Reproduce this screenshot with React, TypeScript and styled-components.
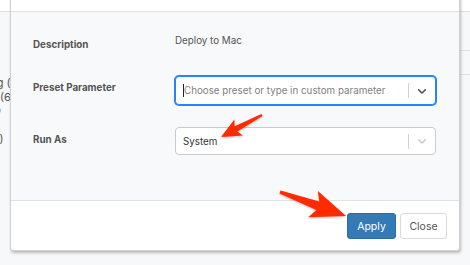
import React from "react";
import styled, { createGlobalStyle } from "styled-components";

const GlobalStyle = createGlobalStyle`
  html, body {
    margin: 0;
    padding: 0;
    background: #f7f8fa;
  }
  body {
    font-family: Inter, "Liberation Sans", Arial, sans-serif;
    -webkit-font-smoothing: antialiased;
  }
`;

type Pt = [number, number];

// tapered arrow with a slightly barbed head
const arrowPoints = (
  tail: Pt,
  tip: Pt,
  headLen: number,
  headW: number,
  tailW: number,
  neckW: number,
  barb: number
) => {
  const dx = tip[0] - tail[0];
  const dy = tip[1] - tail[1];
  const len = Math.sqrt(dx * dx + dy * dy);
  const ux = dx / len;
  const uy = dy / len;
  const nx = -uy;
  const ny = ux;
  const bx = tip[0] - ux * headLen;
  const by = tip[1] - uy * headLen;
  const pts: Pt[] = [
    [tail[0] + (nx * tailW) / 2, tail[1] + (ny * tailW) / 2],
    [bx + (nx * neckW) / 2, by + (ny * neckW) / 2],
    [bx + nx * headW - ux * barb, by + ny * headW - uy * barb],
    tip,
    [bx - nx * headW - ux * barb, by - ny * headW - uy * barb],
    [bx - (nx * neckW) / 2, by - (ny * neckW) / 2],
    [tail[0] - (nx * tailW) / 2, tail[1] - (ny * tailW) / 2],
  ];
  return pts.map((p) => `${p[0].toFixed(1)},${p[1].toFixed(1)}`).join(" ");
};

const Chevron = ({ color }: { color: string }) => (
  <svg width="14" height="14" viewBox="0 0 20 20" fill={color}>
    <path d="M4.516 7.548c0.436-0.446 1.043-0.481 1.576 0l3.908 3.747 3.908-3.747c0.533-0.481 1.141-0.446 1.574 0 0.436 0.445 0.408 1.197 0 1.615-0.406 0.418-4.695 4.502-4.695 4.502-0.217 0.223-0.502 0.335-0.787 0.335s-0.57-0.112-0.789-0.335c0 0-4.287-4.084-4.695-4.502s-0.436-1.17 0-1.615z" />
  </svg>
);

const App = () => {
  return (
    <>
      <GlobalStyle />
      <Page>
        <TopBar />
        <Backdrop>
          <BgList>
            <BgLine $shift={-39} $top={65}>Pending (6)</BgLine>
            <BgLine $shift={-34} $top={1}>Failed (6)</BgLine>
            <BgLine $shift={-19} $top={0}>Info</BgLine>
            <BgLine $shift={-40} $top={16}>Total (0)</BgLine>
          </BgList>
          <BgTable>
            <BgRow $h={38} />
            <BgRow $h={23} />
          </BgTable>
        </Backdrop>

        <Modal>
          <ModalHeader />
          <ModalBody>
            <Row $top={22}>
              <Label $offset={4}>Description</Label>
              <Value>Deploy to Mac</Value>
            </Row>
            <Row $top={24}>
              <Label $offset={5}>Preset Parameter</Label>
              <Select $focused>
                <SelectValue $placeholder>
                  <Caret />
                  Choose preset or type in custom parameter
                </SelectValue>
                <Separator />
                <Indicator>
                  <Chevron color="#555" />
                </Indicator>
              </Select>
            </Row>
            <Row $top={22}>
              <Label $offset={6}>Run As</Label>
              <Select>
                <SelectValue>System</SelectValue>
                <Separator />
                <Indicator>
                  <Chevron color="#ccc" />
                </Indicator>
              </Select>
            </Row>
          </ModalBody>
          <ModalFooter>
            <Button $primary>Apply</Button>
            <Button>Close</Button>
          </ModalFooter>
        </Modal>

        <Annotations viewBox="0 0 470 265">
          <polygon points={arrowPoints([262, 115], [221, 137], 17, 9, 2, 6, 3)} />
          <polygon points={arrowPoints([280, 192], [346, 216], 30, 14, 3, 9, 5)} />
        </Annotations>
      </Page>
    </>
  );
};

const Page = styled.div`
  position: relative;
  width: 470px;
  height: 265px;
  overflow: hidden;
  background: #f7f8fa;
`;

const TopBar = styled.div`
  height: 11px;
  border-bottom: 1px solid #dcdfe3;
  background: #fff;
`;

const Backdrop = styled.div`
  display: flex;
  justify-content: space-between;
`;

const BgList = styled.div`
  width: 40px;
  overflow: hidden;
  display: flex;
  flex-direction: column;
`;

const BgLine = styled.div<{ $shift: number; $top: number }>`
  margin-left: ${(p) => p.$shift}px;
  margin-top: ${(p) => p.$top}px;
  white-space: nowrap;
  font-size: 11px;
  line-height: 13px;
  color: #555;
`;

const BgTable = styled.div`
  width: 40px;
  display: flex;
  flex-direction: column;
`;

const BgRow = styled.div<{ $h: number }>`
  height: ${(p) => p.$h}px;
  border-bottom: 1px solid #dfe1e4;
`;

const Modal = styled.div`
  position: absolute;
  left: 10px;
  top: -30px;
  width: 448px;
  background: #fff;
  border: 1px solid rgba(0, 0, 0, 0.18);
  border-top: none;
  border-radius: 0 0 3px 3px;
  box-shadow: 1px 2px 3px rgba(0, 0, 0, 0.25);
  display: flex;
  flex-direction: column;
`;

const ModalHeader = styled.div`
  height: 41px;
  border-bottom: 1px solid #dfe1e4;
  background: #fff;
`;

const ModalBody = styled.div`
  height: 189px;
  box-sizing: border-box;
  padding: 0 23px 0 22px;
  background: #f8f9fb;
  border-bottom: 1px solid #dfe1e4;
`;

const Row = styled.div<{ $top: number }>`
  display: grid;
  grid-template-columns: 142px 261px;
  align-items: start;
  margin-top: ${(p) => p.$top}px;
`;

const Label = styled.div<{ $offset: number }>`
  padding-top: ${(p) => p.$offset}px;
  font-size: 9.8px;
  line-height: 14px;
  font-weight: 700;
  color: #555;
`;

const Value = styled.div`
  font-size: 9.8px;
  line-height: 14px;
  color: #555;
`;

const Select = styled.div<{ $focused?: boolean }>`
  box-sizing: border-box;
  height: ${(p) => (p.$focused ? 29 : 28)}px;
  display: flex;
  align-items: center;
  background: #fff;
  border: 1px solid ${(p) => (p.$focused ? "#2684ff" : "#c9cbcf")};
  box-shadow: ${(p) => (p.$focused ? "0 0 0 1px #2684ff" : "none")};
  border-radius: 4px;
`;

const SelectValue = styled.div<{ $placeholder?: boolean }>`
  flex: 1;
  display: flex;
  align-items: center;
  padding-left: 7px;
  font-size: 9.8px;
  color: ${(p) => (p.$placeholder ? "#7f7f7f" : "#333")};
  white-space: nowrap;
  overflow: hidden;
`;

const Caret = styled.span`
  width: 1px;
  height: 13px;
  background: #222;
`;

const Separator = styled.span`
  width: 1px;
  height: 15px;
  background: #d0d0d0;
`;

const Indicator = styled.div`
  width: 26px;
  display: flex;
  justify-content: center;
  align-items: center;
`;

const ModalFooter = styled.div`
  height: 49px;
  box-sizing: border-box;
  display: flex;
  justify-content: flex-end;
  align-items: flex-start;
  gap: 4px;
  padding: 12px 12px 0 0;
`;

const Button = styled.button<{ $primary?: boolean }>`
  height: 26px;
  width: ${(p) => (p.$primary ? 49 : 47)}px;
  padding: 0;
  font-family: Inter, "Liberation Sans", Arial, sans-serif;
  font-size: 10.5px;
  border-radius: 3px;
  border: 1px solid ${(p) => (p.$primary ? "#2e6da4" : "#dadada")};
  background: ${(p) => (p.$primary ? "#337ab7" : "#fff")};
  color: ${(p) => (p.$primary ? "#fff" : "#555")};
`;

const Annotations = styled.svg`
  position: absolute;
  left: 0;
  top: 0;
  width: 470px;
  height: 265px;
  pointer-events: none;
  fill: #ff2a00;
  filter: drop-shadow(0 1px 1px rgba(0, 0, 0, 0.25));
`;

export default App;
